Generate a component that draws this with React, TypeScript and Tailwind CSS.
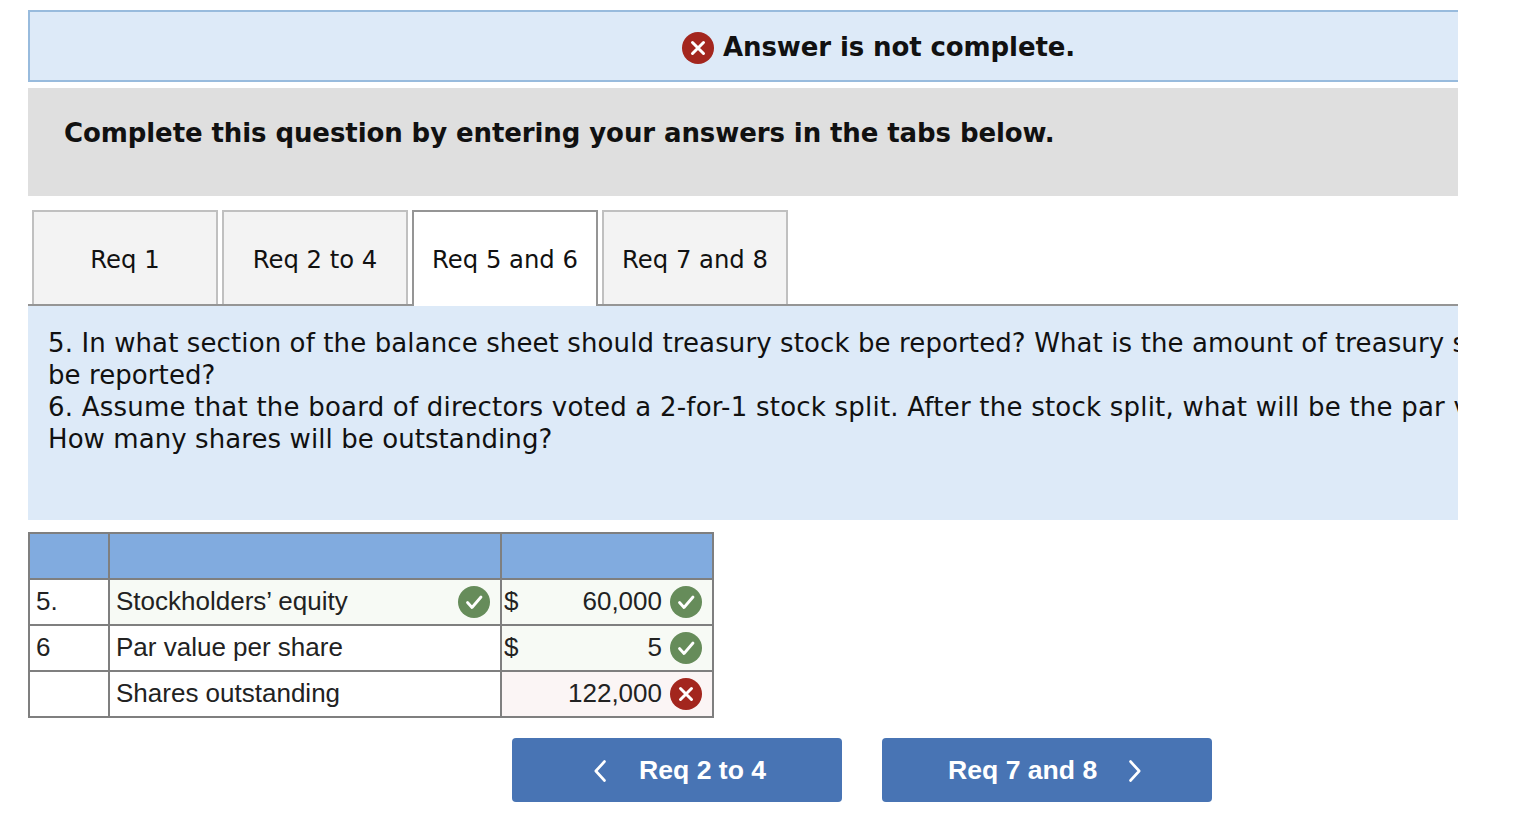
const verdana = 'font-["DejaVu_Sans",sans-serif]';
const arial = 'font-["Liberation_Sans",Arial,sans-serif]';

function Badge({ ok, className = '' }: { ok: boolean; className?: string }) {
  return (
    <svg viewBox="0 0 32 32" className={`shrink-0 w-[32px] h-[32px] ${className}`}>
      <circle cx="16" cy="16" r="16" fill={ok ? '#668c5a' : '#a3261e'} />
      {ok ? (
        <path d="M9.5 16.5l4.5 5 9-10.5" fill="none" stroke="#fff" strokeWidth="2.8" strokeLinecap="round" strokeLinejoin="round" />
      ) : (
        <path d="M10.5 10.5l11 11M21.5 10.5l-11 11" fill="none" stroke="#fff" strokeWidth="3" strokeLinecap="round" />
      )}
    </svg>
  );
}

function Tab({ label, active }: { label: string; active?: boolean }) {
  return (
    <div
      className={`w-[186px] flex items-center justify-center text-[24.3px] text-[#111] border-2 ${
        active
          ? 'h-[96px] pt-[2px] bg-white border-[#959595] border-b-0 -mb-[2px] relative z-10'
          : 'h-[94px] pt-[4px] bg-[#f3f3f3] border-[#c0c0c0] border-b-0'
      }`}
    >
      {label}
    </div>
  );
}

export default function App() {
  return (
    <div className="min-h-[830px] bg-white pt-[10px] pl-[28px] overflow-hidden">
      <div className={`w-[1430px] overflow-hidden ${verdana}`}>
        <div className="h-[72px] bg-[#ddeaf8] border-2 border-r-0 border-[#98bbdd] flex items-center pl-[652px] pt-[2px] gap-[9px]">
          <Badge ok={false} className="mt-[2px]" />
          <span className="text-[26px] tracking-[-0.1px] font-bold text-[#111] leading-none whitespace-nowrap">Answer is not complete.</span>
        </div>

        <div className="mt-[6px] h-[108px] bg-[#dfdfdf] pl-[36px] pt-[27px]">
          <p className="text-[26px] tracking-[-0.09px] leading-[36px] font-bold text-[#111] whitespace-nowrap">
            Complete this question by entering your answers in the tabs below.
          </p>
        </div>

        <div className="mt-[14px] pl-[4px] flex gap-[4px] border-b-2 border-[#959595] h-[96px]">
          <Tab label="Req 1" />
          <Tab label="Req 2 to 4" />
          <Tab label="Req 5 and 6" active />
          <Tab label="Req 7 and 8" />
        </div>

        <div className="h-[214px] bg-[#ddeaf8] pl-[20px] pt-[21px] text-[26px] leading-[32px] text-[#111]">
          <p className="whitespace-nowrap tracking-[0.11px]">5. In what section of the balance sheet should treasury stock be reported? What is the amount of treasury stock?</p>
          <p className="whitespace-nowrap tracking-[0.08px]">be reported?</p>
          <p className="whitespace-nowrap tracking-[0.22px]">6. Assume that the board of directors voted a 2-for-1 stock split. After the stock split, what will be the par value per share?</p>
          <p className="whitespace-nowrap tracking-[0.08px]">How many shares will be outstanding?</p>
        </div>
      </div>

      <div className={`mt-[12px] w-[686px] border-2 border-[#7f7f7f] text-[26px] text-[#222] ${arial}`}>
        <div className="flex h-[46px] bg-[#81abdf] border-b-2 border-[#7f7f7f]">
          <div className="w-[80px] border-r-2 border-[#7f7f7f]" />
          <div className="w-[392px] border-r-2 border-[#7f7f7f]" />
          <div className="flex-1" />
        </div>

        <div className="flex h-[46px] border-b-2 border-[#7f7f7f]">
          <div className="w-[80px] border-r-2 border-[#7f7f7f] flex items-center pl-[6px] pb-[2px]">5.</div>
          <div className="w-[392px] border-r-2 border-[#7f7f7f] bg-[#f7faf5] flex items-center justify-between pl-[6px] pr-[10px]">
            <span className="-mt-[2px]">Stockholders’ equity</span>
            <Badge ok />
          </div>
          <div className="flex-1 bg-[#f7faf5] flex items-center pl-[2px] pr-[10px]">
            <span className="-mt-[2px]">$</span>
            <span className="ml-auto mr-[8px] -mt-[2px]">60,000</span>
            <Badge ok />
          </div>
        </div>

        <div className="flex h-[46px] border-b-2 border-[#7f7f7f]">
          <div className="w-[80px] border-r-2 border-[#7f7f7f] flex items-center pl-[6px] pb-[2px]">6</div>
          <div className="w-[392px] border-r-2 border-[#7f7f7f] flex items-center pl-[6px] pb-[2px]">Par value per share</div>
          <div className="flex-1 bg-[#f7faf5] flex items-center pl-[2px] pr-[10px]">
            <span className="-mt-[2px]">$</span>
            <span className="ml-auto mr-[8px] -mt-[2px]">5</span>
            <Badge ok />
          </div>
        </div>

        <div className="flex h-[44px]">
          <div className="w-[80px] border-r-2 border-[#7f7f7f]" />
          <div className="w-[392px] border-r-2 border-[#7f7f7f] flex items-center pl-[6px] pb-[2px]">Shares outstanding</div>
          <div className="flex-1 bg-[#fbf5f5] flex items-center justify-end pr-[10px]">
            <span className="mr-[8px] -mt-[2px]">122,000</span>
            <Badge ok={false} />
          </div>
        </div>
      </div>

      <div className={`mt-[20px] ml-[484px] flex gap-[40px] text-[26.6px] font-bold text-white ${arial}`}>
        <div className="w-[330px] h-[64px] pt-[2px] rounded-[4px] bg-[#4874b4] flex items-center pl-[82px]">
          <svg viewBox="0 0 12 22" className="w-[12px] h-[22px]" fill="none" stroke="currentColor" strokeWidth="2.6" strokeLinecap="round" strokeLinejoin="round">
            <path d="M10.5 1.5L1.8 11l8.7 9.5" />
          </svg>
          <span className="ml-[33px] whitespace-nowrap">Req 2 to 4</span>
        </div>
        <div className="w-[330px] h-[64px] pt-[2px] rounded-[4px] bg-[#4874b4] flex items-center pl-[66px]">
          <span className="whitespace-nowrap">Req 7 and 8</span>
          <svg viewBox="0 0 12 22" className="w-[12px] h-[22px] ml-[32px]" fill="none" stroke="currentColor" strokeWidth="2.6" strokeLinecap="round" strokeLinejoin="round">
            <path d="M1.5 1.5l8.7 9.5-8.7 9.5" />
          </svg>
        </div>
      </div>
    </div>
  );
}
